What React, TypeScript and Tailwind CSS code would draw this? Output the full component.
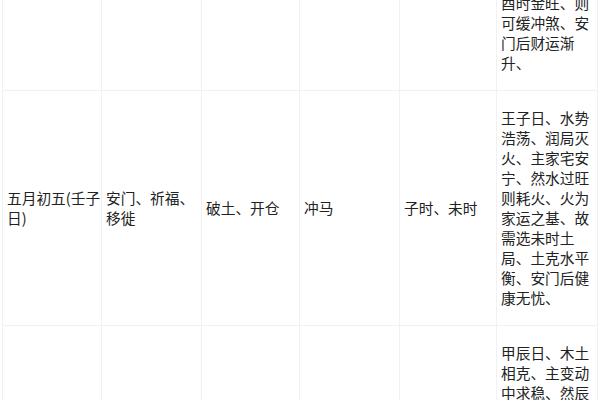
import React from "react";

type Row = {
  date: string;
  yi: string;
  other: string;
  chong: string;
  time: string;
  note: string;
};

const rows: Row[] = [
  {
    date: "",
    yi: "",
    other: "",
    chong: "",
    time: "",
    note: "酉时金旺、则可缓冲煞、安门后财运渐升、",
  },
  {
    date: "五月初五(壬子日)",
    yi: "安门、祈福、移徙",
    other: "破土、开仓",
    chong: "冲马",
    time: "子时、未时",
    note: "王子日、水势浩荡、润局灭火、主家宅安宁、然水过旺则耗火、火为家运之基、故需选未时土局、土克水平衡、安门后健康无忧、",
  },
  {
    date: "五月初七(甲辰日)",
    yi: "安门、入宅、纳财",
    other: "动土、嫁娶",
    chong: "冲狗",
    time: "巳时、申时",
    note: "甲辰日、木土相克、主变动中求稳、然辰土为水库、宜选巳时火局、以火生土、安门后家运稳固、",
  },
];

const widths = ["w-[99px]", "w-[100px]", "w-[98px]", "w-[100px]", "w-[97px]", "w-[101px]"];

function Cell({ children }: { children: React.ReactNode }) {
  return (
    <td className="border border-[#f1f1f1] pl-[4px] pr-0 py-[17px] align-middle">
      {children}
    </td>
  );
}

export default function App() {
  return (
    <div className="w-[600px] h-[400px] overflow-hidden bg-white">
      <table
        className="table-fixed border-collapse ml-[2px] mt-[-25px] text-[14.7px] leading-[20px] text-[#222]"
        style={{ fontFamily: '"Noto Sans CJK SC", "Noto Sans", sans-serif' }}
      >
        <colgroup>
          {widths.map((w, i) => (
            <col key={i} className={w} />
          ))}
        </colgroup>
        <tbody>
          {rows.map((r, i) => (
            <tr key={i}>
              <Cell>{r.date}</Cell>
              <Cell>{r.yi}</Cell>
              <Cell>{r.other}</Cell>
              <Cell>{r.chong}</Cell>
              <Cell>{r.time}</Cell>
              <Cell>{r.note}</Cell>
            </tr>
          ))}
        </tbody>
      </table>
    </div>
  );
}
